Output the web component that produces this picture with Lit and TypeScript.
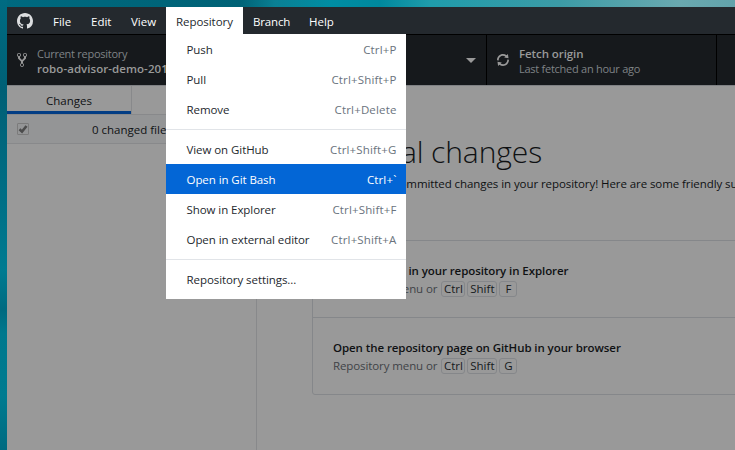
import { LitElement, html, css, svg } from "lit";
import { customElement } from "lit/decorators.js";

const MARK = "M8 0C3.58 0 0 3.58 0 8c0 3.54 2.29 6.53 5.47 7.59.4.07.55-.17.55-.38 0-.19-.01-.82-.01-1.49-2.01.37-2.53-.49-2.69-.94-.09-.23-.48-.94-.82-1.13-.28-.15-.68-.52-.01-.53.63-.01 1.08.58 1.23.82.72 1.21 1.87.87 2.33.66.07-.52.28-.87.51-1.07-1.78-.2-3.64-.89-3.64-3.95 0-.87.31-1.59.82-2.15-.08-.2-.36-1.02.08-2.12 0 0 .67-.21 2.2.82.64-.18 1.32-.27 2-.27s1.36.09 2 .27c1.53-1.04 2.2-.82 2.2-.82.44 1.1.16 1.92.08 2.12.51.56.82 1.27.82 2.15 0 3.07-1.87 3.75-3.65 3.95.29.25.54.73.54 1.48 0 1.07-.01 1.93-.01 2.2 0 .21.15.46.55.38A8.01 8.01 0 0016 8c0-4.42-3.58-8-8-8z";
const FORK = "M8 1a1.993 1.993 0 0 0-1 3.72V6L5 8 3 6V4.720A1.993 1.993 0 0 0 2 1a1.993 1.993 0 0 0-1 3.720V6.500l3 3v1.780A1.993 1.993 0 0 0 5 15a1.993 1.993 0 0 0 1-3.720V9.500l3-3V4.720A1.993 1.993 0 0 0 8 1zM2 4.200C1.340 4.200.8 3.650.8 3c0-.65.55-1.200 1.200-1.200.65 0 1.200.55 1.200 1.200 0 .65-.55 1.200-1.200 1.200zm3 10c-.66 0-1.200-.55-1.200-1.200 0-.65.55-1.200 1.200-1.200.65 0 1.200.55 1.200 1.200 0 .65-.55 1.200-1.200 1.200zm3-10c-.66 0-1.200-.55-1.200-1.200 0-.65.55-1.200 1.200-1.200.65 0 1.200.55 1.200 1.200 0 .65-.55 1.200-1.200 1.200z";
const SYNC = "M10.240 7.400a4.150 4.150 0 0 1-1.200 3.600 4.346 4.346 0 0 1-5.410.540L4.800 10.400.5 9.800l.6 4.200 1.310-1.260c2.360 1.740 5.700 1.570 7.840-.540a5.876 5.876 0 0 0 1.740-4.460l-1.750-.340zM2.960 5a4.346 4.346 0 0 1 5.410-.540L7.200 5.600l4.300.6-.6-4.200-1.310 1.260c-2.360-1.740-5.700-1.570-7.850.540C.5 5.030-.06 6.650.010 8.260l1.750.350A4.170 4.170 0 0 1 2.960 5z";

type Item = { label: string; keys?: string; active?: boolean } | null;
const ITEMS: Item[] = [
  { label: "Push", keys: "Ctrl+P" },
  { label: "Pull", keys: "Ctrl+Shift+P" },
  { label: "Remove", keys: "Ctrl+Delete" },
  null,
  { label: "View on GitHub", keys: "Ctrl+Shift+G" },
  { label: "Open in Git Bash", keys: "Ctrl+\`", active: true },
  { label: "Show in Explorer", keys: "Ctrl+Shift+F" },
  { label: "Open in external editor", keys: "Ctrl+Shift+A" },
  null,
  { label: "Repository settings..." },
];
const CARDS = [
  { title: "View the files in your repository in Explorer", key: "F" },
  { title: "Open the repository page on GitHub in your browser", key: "G" },
];

@customElement("app-root")
export class AppRoot extends LitElement {
  static styles = css`
    :host { display: block; position: relative; width: 735px; height: 450px; overflow: hidden; box-sizing: border-box; padding: 7px 0 0 7px;
      font: 11.5px/16px "Open Sans", "Noto Sans", sans-serif; color: #0f1113; white-space: nowrap;
      background: linear-gradient(90deg, #00697f, #006276 240px, #0a8094 275px, #008da3 330px, #00889d 380px, #1f9cab 430px, #3c9ba6 560px, #6aa9b0 680px, #62a3ab); }
    * { box-sizing: border-box; }
    .edge { position: absolute; left: 0; top: 0; width: 7px; height: 450px; background: linear-gradient(#006b82, #005f75 20%, #006f86 45%, #007b91 60%, #006a80 69%, #00788d 74%, #007b90 88%, #006a80); }
    .window { position: relative; width: 728px; height: 443px; display: flex; flex-direction: column; background: #999; }
    .menubar { height: 27px; display: flex; background: #24292e; color: #fff; line-height: 29px; flex: none; }
    .mark { width: 36px; padding: 6px 0 0 10px; line-height: 0; flex: none; }
    .m { padding-left: 10px; flex: none; font-weight: 500; }
    .m.open { background: #fff; color: #24292e; font-weight: 400; letter-spacing: -.05px; }
    .file { width: 38px; } .edit { width: 40px; } .view { width: 45px; } .repo { width: 77px; } .branch { width: 56px; letter-spacing: -.15px; } .help { width: 50px; }
    .toolbar { height: 52px; flex: none; display: flex; border-top: 1px solid #000; background: #16191c; color: #999; border-bottom: 1px solid #808285; }
    .cell { border-right: 1px solid #000; display: flex; align-items: center; }
    .current { width: 250px; padding-left: 10px; gap: 10px; }
    .current b { letter-spacing: .06px; }
    .branchcell { width: 230px; justify-content: flex-end; padding-right: 10px; }
    .fetch { width: 230px; padding-left: 10px; gap: 10px; }
    .toolbar svg { display: block; flex: none; }
    .two { line-height: 15px; padding-top: 1px; }
    .sub { color: #7f8386; font-size: 11px; letter-spacing: -.26px; }
    .caret { border: 5px solid transparent; border-top-color: #999; border-bottom: 0; }
    b { font-weight: 600; letter-spacing: -.08px; }
    .body { flex: 1; display: flex; min-height: 0; }
    .side { width: 250px; border-right: 1px solid #88898b; flex: none; }
    .tabs { height: 29px; display: flex; border-bottom: 1px solid #88898b; }
    .tab { width: 125px; border-right: 1px solid #88898b; text-align: center; line-height: 30px; position: relative; height: 28px; }
    .tab.on::after { content: ""; position: absolute; left: 0; bottom: 0; height: 3px; width: 124px; background: #023d84; }
    .count { height: 29px; border-bottom: 1px solid #88898b; background: #949596; display: flex; align-items: center; padding-left: 10px; }
    .label { padding-top: 2px; }
    .check { width: 12px; height: 12px; border: 1px solid #7b7b7b; border-radius: 1px; line-height: 0; margin-right: 63px; }
    .main { flex: 1; min-width: 0; overflow: hidden; padding: 43px 0 0 55px; }
    h1 { margin: 0; font: 300 30px/46px "Open Sans", sans-serif; letter-spacing: -.1px; width: 230px; text-align: right; }
    .lead { margin: 0; width: 440px; height: 20px; line-height: 18px; overflow: hidden; letter-spacing: -.075px; }
    .cards { margin-top: 45px; width: 500px; border: 1px solid #85878a; border-radius: 3px; }
    .card { height: 76px; padding: 21px 0 0 20px; line-height: 18px; }
    .card + .card { height: 77px; border-top: 1px solid #85878a; }
    .hint { color: #3f4347; display: flex; align-items: center; letter-spacing: -.1px; }
    kbd { font: inherit; letter-spacing: 0; color: #16191c; border: 1px solid #85878a; border-radius: 3px; height: 16px; line-height: 14px; text-align: center; margin-right: 2px; }
    .k1 { width: 24px; margin-left: 4px; } .k2 { width: 30px; } .k3 { width: 18px; }
    .menu { position: absolute; left: 166px; top: 34px; width: 240px; height: 265px; background: #fff; color: #24292e; }
    .item { height: 30px; line-height: 32px; padding: 0 9.5px 0 20.5px; display: flex; justify-content: space-between; letter-spacing: -.07px; }
    .keys { color: #6a737d; letter-spacing: .15px; }
    .item.active { background: #0366d6; } .item.active, .item.active .keys { color: #fff; }
    .sep { height: 10px; padding-top: 5px; } .sep::before { content: ""; display: block; height: 1px; background: #e1e4e8; }
  `;

  render() {
    return html`
      <div class="edge"></div>
      <div class="window">
        <div class="menubar">
          <div class="mark"><svg width="16" height="16" viewBox="0 0 16 16"><path fill="#dcdee0" d=${MARK} /></svg></div>
          <span class="m file">File</span><span class="m edit">Edit</span><span class="m view">View</span>
          <span class="m open repo">Repository</span><span class="m branch">Branch</span><span class="m help">Help</span>
        </div>
        <div class="toolbar">
          <div class="cell current">
            <svg width="10" height="16" viewBox="0 0 10 16"><path fill="#999" d=${FORK} /></svg>
            <div class="two"><div class="sub">Current repository</div><b>robo-advisor-demo-2018</b></div>
          </div>
          <div class="cell branchcell"><i class="caret"></i></div>
          <div class="cell fetch">
            <svg width="12" height="16" viewBox="0 0 12 16"><path fill="#999" d=${SYNC} /></svg>
            <div class="two"><b>Fetch origin</b><div class="sub">Last fetched an hour ago</div></div>
          </div>
        </div>
        <div class="body">
          <div class="side">
            <div class="tabs"><div class="tab on">Changes</div></div>
            <div class="count">
              <span class="check"><svg width="10" height="10" viewBox="0 0 10 10">${svg`<path d="M1.500 5.300 4 7.600 8.500 2" fill="none" stroke="#4c4c4c" stroke-width="2.600" />`}</svg></span><span class="label">0 changed files</span>
            </div>
          </div>
          <div class="main">
            <h1>No local changes</h1>
            <p class="lead">You have no uncommitted changes in your repository! Here are some friendly suggestions</p>
            <div class="cards">
              ${CARDS.map((c) => html`<div class="card"><b>${c.title}</b>
                <div class="hint">Repository menu or <kbd class="k1">Ctrl</kbd><kbd class="k2">Shift</kbd><kbd class="k3">${c.key}</kbd></div></div>`)}
            </div>
          </div>
        </div>
      </div>
      <div class="menu">
        ${ITEMS.map((i) => i
          ? html`<div class="item ${i.active ? "active" : ""}"><span>${i.label}</span><span class="keys">${i.keys ?? ""}</span></div>`
          : html`<div class="sep"></div>`)}
      </div>
    `;
  }
}
